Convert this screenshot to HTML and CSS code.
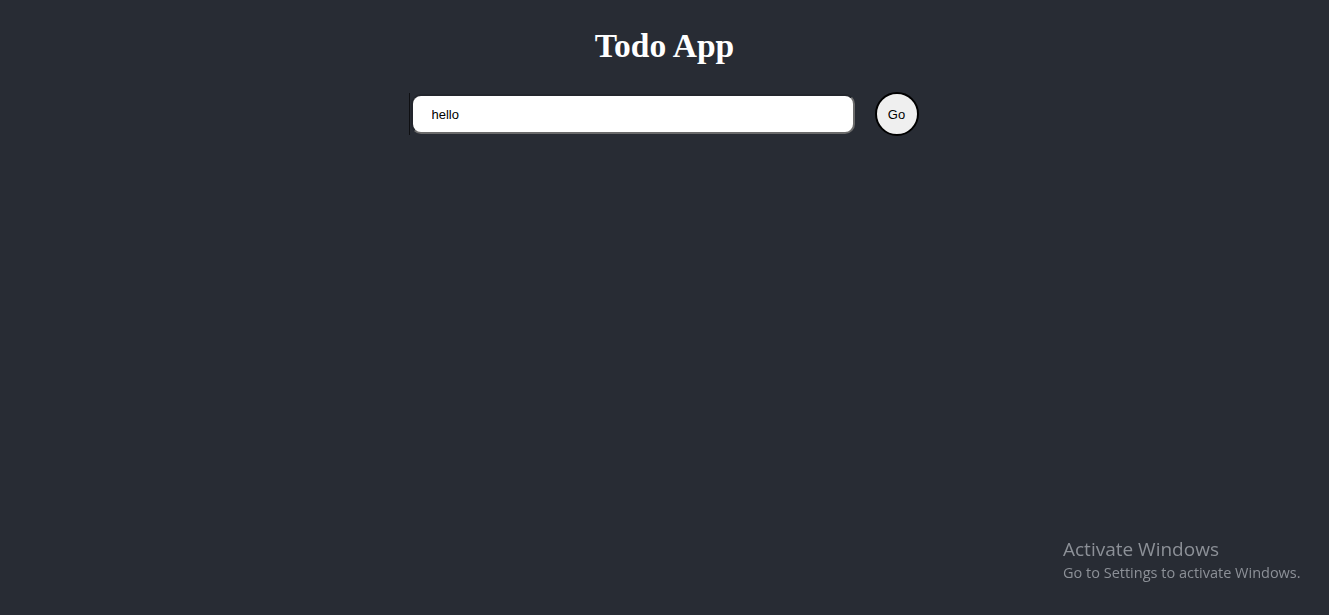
FILE: index.html
```html
<!DOCTYPE html>
<html>
<head>
<meta charset="utf-8">
<link rel="stylesheet" href="styles.css">
</head>
<body>
<div class="app">
  <h1 class="title">Todo App</h1>
  <form class="todo-form">
    <div class="input-wrap">
      <input class="todo-input" type="text" value="hello">
    </div>
    <button class="go-btn" type="button">Go</button>
  </form>
</div>
<div class="watermark">
  <div class="wm-title">Activate Windows</div>
  <div class="wm-sub">Go to Settings to activate Windows.</div>
</div>
</body>
</html>
```
FILE: styles.css
```css
html, body {
  margin: 0;
  padding: 0;
  height: 100%;
}
body {
  background: #282c34;
  font-family: "Liberation Serif", serif;
  overflow: hidden;
}
.app {
  display: flex;
  flex-direction: column;
  align-items: center;
  padding-top: 8px;
}
.title {
  color: #ffffff;
  font-size: 33.5px;
  font-weight: bold;
  margin: 18px 0 0 0;
  line-height: 39px;
}
.todo-form {
  display: flex;
  align-items: center;
  gap: 20px;
  margin-top: 27px;
  margin-right: 2px;
}
.input-wrap {
  display: flex;
  border-left: 1px solid #0e0f12;
  height: 42px;
  align-items: center;
  padding-left: 1px;
}
.todo-input {
  box-sizing: border-box;
  width: 444px;
  height: 40px;
  margin: 0;
  border-radius: 10px;
  border: 2px solid #6b6b6b;
  border-top-color: #23262d;
  border-left-color: #23262d;
  background: #fff;
  padding: 0 0 0 19px;
  font-family: "Liberation Sans", Arial, sans-serif;
  font-size: 13px;
  color: #000;
  outline: none;
}
.go-btn {
  box-sizing: border-box;
  width: 44px;
  height: 44px;
  border-radius: 50%;
  border: 2px solid #000;
  background: #efefef;
  font-family: "Liberation Sans", Arial, sans-serif;
  font-size: 13px;
  color: #000;
  padding: 0;
}
.watermark {
  position: fixed;
  left: 1063px;
  top: 537px;
  font-family: "Open Sans", "Noto Sans", sans-serif;
  color: #8c9097;
}
.wm-title {
  font-size: 19px;
  line-height: 25px;
}
.wm-sub {
  font-size: 14.5px;
  line-height: 22px;
}
```
